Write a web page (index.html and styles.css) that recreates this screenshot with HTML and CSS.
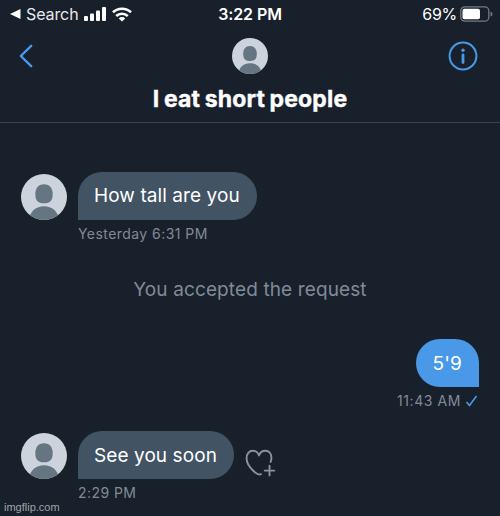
FILE: index.html
```html
<!DOCTYPE html>
<html lang="en">
<head>
<meta charset="utf-8">
<title>Messages</title>
<link rel="stylesheet" href="styles.css">
</head>
<body>
<svg class="defs" width="0" height="0">
  <defs>
    <clipPath id="round"><circle cx="23" cy="23" r="23"/></clipPath>
    <symbol id="person" viewBox="0 0 46 46">
      <g clip-path="url(#round)">
        <rect width="46" height="46" fill="#ccd3dc"/>
        <path d="M23 10.200c5.700 0 8.700 4.200 8.700 9.800 0 6.500-2.300 9.300-8.700 9.300s-8.700-2.800-8.700-9.300c0-5.600 3-9.800 8.700-9.800z" fill="#667582"/>
        <path d="M8 46c1-9 7-13.800 15-13.800S37 37 38 46z" fill="#667582"/>
      </g>
    </symbol>
  </defs>
</svg>
<div class="screen">
  <div class="status">
    <div class="status-left">
      <svg width="11" height="10" viewBox="0 0 11 10"><path d="M0 5 10.500 0v10z" fill="#fff"/></svg>
      <span class="search">Search</span>
      <svg class="signal" width="23" height="14" viewBox="0 0 23 14" fill="#fff"><rect x="0" y="9" width="4" height="5" rx="1"/><rect x="6" y="6.500" width="4" height="7.500" rx="1"/><rect x="12" y="3.500" width="4" height="10.500" rx="1"/><rect x="18" y="0" width="4" height="14" rx="1"/></svg>
      <svg class="wifi" width="20" height="15" viewBox="0 0 20 15" fill="none" stroke="#fff" stroke-width="2.600"><path d="M1 5.300a13 13 0 0 1 18 0M4.200 9a8.400 8.400 0 0 1 11.600 0"/><path d="M10 14.500 6.800 11.400a4.600 4.600 0 0 1 6.400 0z" fill="#fff" stroke="none"/></svg>
    </div>
    <div class="time">3:22 PM</div>
    <div class="status-right">
      <span class="percent">69%</span>
      <svg width="33" height="16" viewBox="0 0 33 16"><rect x=".8" y=".8" width="28" height="14.400" rx="4" fill="none" stroke="#747a83" stroke-width="1.300"/><rect x="2.500" y="2.800" width="17.500" height="10.400" rx="2" fill="#fff"/><path d="M30.500 5.500q2 .5 2 2.500t-2 2.500z" fill="#747a83"/></svg>
    </div>
  </div>
  <header class="header">
    <div class="nav">
      <svg class="back" width="16" height="26" viewBox="0 0 16 26"><path d="M13.200 2.800 2.800 13l10.400 10.200" fill="none" stroke="#4a99e9" stroke-width="2.400" stroke-linecap="round" stroke-linejoin="round"/></svg>
      <svg width="36" height="36"><use href="#person"/></svg>
      <svg class="info" width="30" height="30" viewBox="0 0 30 30"><circle cx="15" cy="15" r="13.400" fill="none" stroke="#4a99e9" stroke-width="2"/><circle cx="15" cy="9.300" r="1.700" fill="#4a99e9"/><path d="M15 14v7.500" stroke="#4a99e9" stroke-width="2.800" stroke-linecap="round"/></svg>
    </div>
    <h1 class="title"><span>I eat short people</span></h1>
  </header>
  <main class="thread">
    <div class="message">
      <svg width="46" height="46"><use href="#person"/></svg>
      <div class="bubble first"><span>How tall are you</span></div>
    </div>
    <div class="meta"><span>Yesterday 6:31 PM</span></div>
    <div class="notice"><span>You accepted the request</span></div>
    <div class="message sent">
      <div class="bubble blue"><span>5'9</span></div>
    </div>
    <div class="meta sent">
      <span class="sent-time">11:43 AM</span>
      <svg width="13" height="12" viewBox="0 0 13 12"><path d="m1.500 7 3 3.500L11.500 1" fill="none" stroke="#4a99e9" stroke-width="1.600"/></svg>
    </div>
    <div class="message last">
      <svg width="46" height="46"><use href="#person"/></svg>
      <div class="bubble second"><span>See you soon</span></div>
      <svg class="heart" width="32" height="30" viewBox="0 0 32 30" fill="none" stroke="#8c929e" stroke-width="1.900" stroke-linecap="round" stroke-linejoin="round"><path d="M17 27.200c-2.500 1-5-.8-8-3.700-4-3.900-6.400-7.500-6.400-12C2.600 6.800 5 3.800 8.800 3.800c3.200 0 5.300 2 6.200 4.700 1-2.700 3.200-4.700 6.400-4.700 3.900 0 6 3 6 7 0 1.400-.3 2.800-.8 4.200"/><path d="M25.500 18.800v9.600M20.700 23.600h9.600"/></svg>
    </div>
    <div class="meta"><span>2:29 PM</span></div>
  </main>
  <footer class="credit">imgflip.com</footer>
</div>
</body>
</html>
```

FILE: styles.css
```css
* { box-sizing: border-box; }
body { margin: 0; background: #18202b; font-family: Inter, "Liberation Sans", sans-serif; }
svg { display: block; flex: none; }
span { white-space: nowrap; }
.defs { position: absolute; }
.screen { width: 500px; height: 516px; overflow: hidden; background: #18202b; color: #fff; display: flex; flex-direction: column; }
.status { height: 28px; display: grid; grid-template-columns: 1fr auto 1fr; align-items: center; padding: 0 7px 0 10px; font-size: 16px; line-height: 20px; }
.status-left, .status-right { display: flex; align-items: center; }
.status-left { color: #e8eaed; }
.search { width: 51px; margin-left: 5px; letter-spacing: -0.1px; }
.signal { margin-left: 7px; }
.wifi { margin-left: 5px; }
.time { font-weight: 600; letter-spacing: -0.1px; margin-right: 3px; }
.status-right { justify-content: flex-end; gap: 3px; }
.status-right svg { margin-top: -1px; }
.percent { letter-spacing: -0.3px; }
.header { height: 95px; border-bottom: 1px solid #3b434d; }
.nav { height: 56px; display: grid; grid-template-columns: 1fr 36px 1fr; align-items: center; padding: 0 18px; }
.info { justify-self: end; margin-right: 4px; }
.title { margin: 0; padding-top: 1px; text-align: center; font-size: 23px; font-weight: 700; line-height: 28px; letter-spacing: 0.15px; word-spacing: -1px; -webkit-text-stroke: 0.4px #fff; }
.thread { flex: none; height: 378px; padding: 49px 21px 0; }
.message { display: flex; height: 48px; align-items: flex-start; }
.message > svg:first-child { margin-top: 2px; }
.bubble { height: 48px; margin-left: 11px; padding: 0 16px; border-radius: 24px 24px 24px 0; background: #425364; font-size: 19px; line-height: 47px; letter-spacing: 0.08px; }
.first { width: 179px; }
.message .second { width: 156px; line-height: 49px; }
.message .blue { width: 63px; margin: 0; padding-left: 16.5px; border-radius: 24px 24px 0 24px; background: #4a99e9; line-height: 49px; }
.message.sent { justify-content: flex-end; margin-top: 37.4px; }
.meta { height: 27px; padding-left: 57px; color: #818b97; font-size: 14px; line-height: 27px; letter-spacing: 0.44px; }
.meta.sent { display: flex; justify-content: flex-end; align-items: center; gap: 4px; padding: 0 1px 0 0; letter-spacing: 0.58px; }
.notice { margin-top: 30px; height: 25px; color: #818b97; text-align: center; font-size: 19px; line-height: 25px; letter-spacing: 0.12px; }
.message.last { margin-top: 17px; }
.message.last > svg:first-child { margin-top: 1.6px; }
.message.last .heart { margin: 15.5px 0 0 10px; }
.credit { height: 15px; padding-left: 4px; color: #a0a3a8; font: 11px/12px "Liberation Sans", sans-serif; }
```
